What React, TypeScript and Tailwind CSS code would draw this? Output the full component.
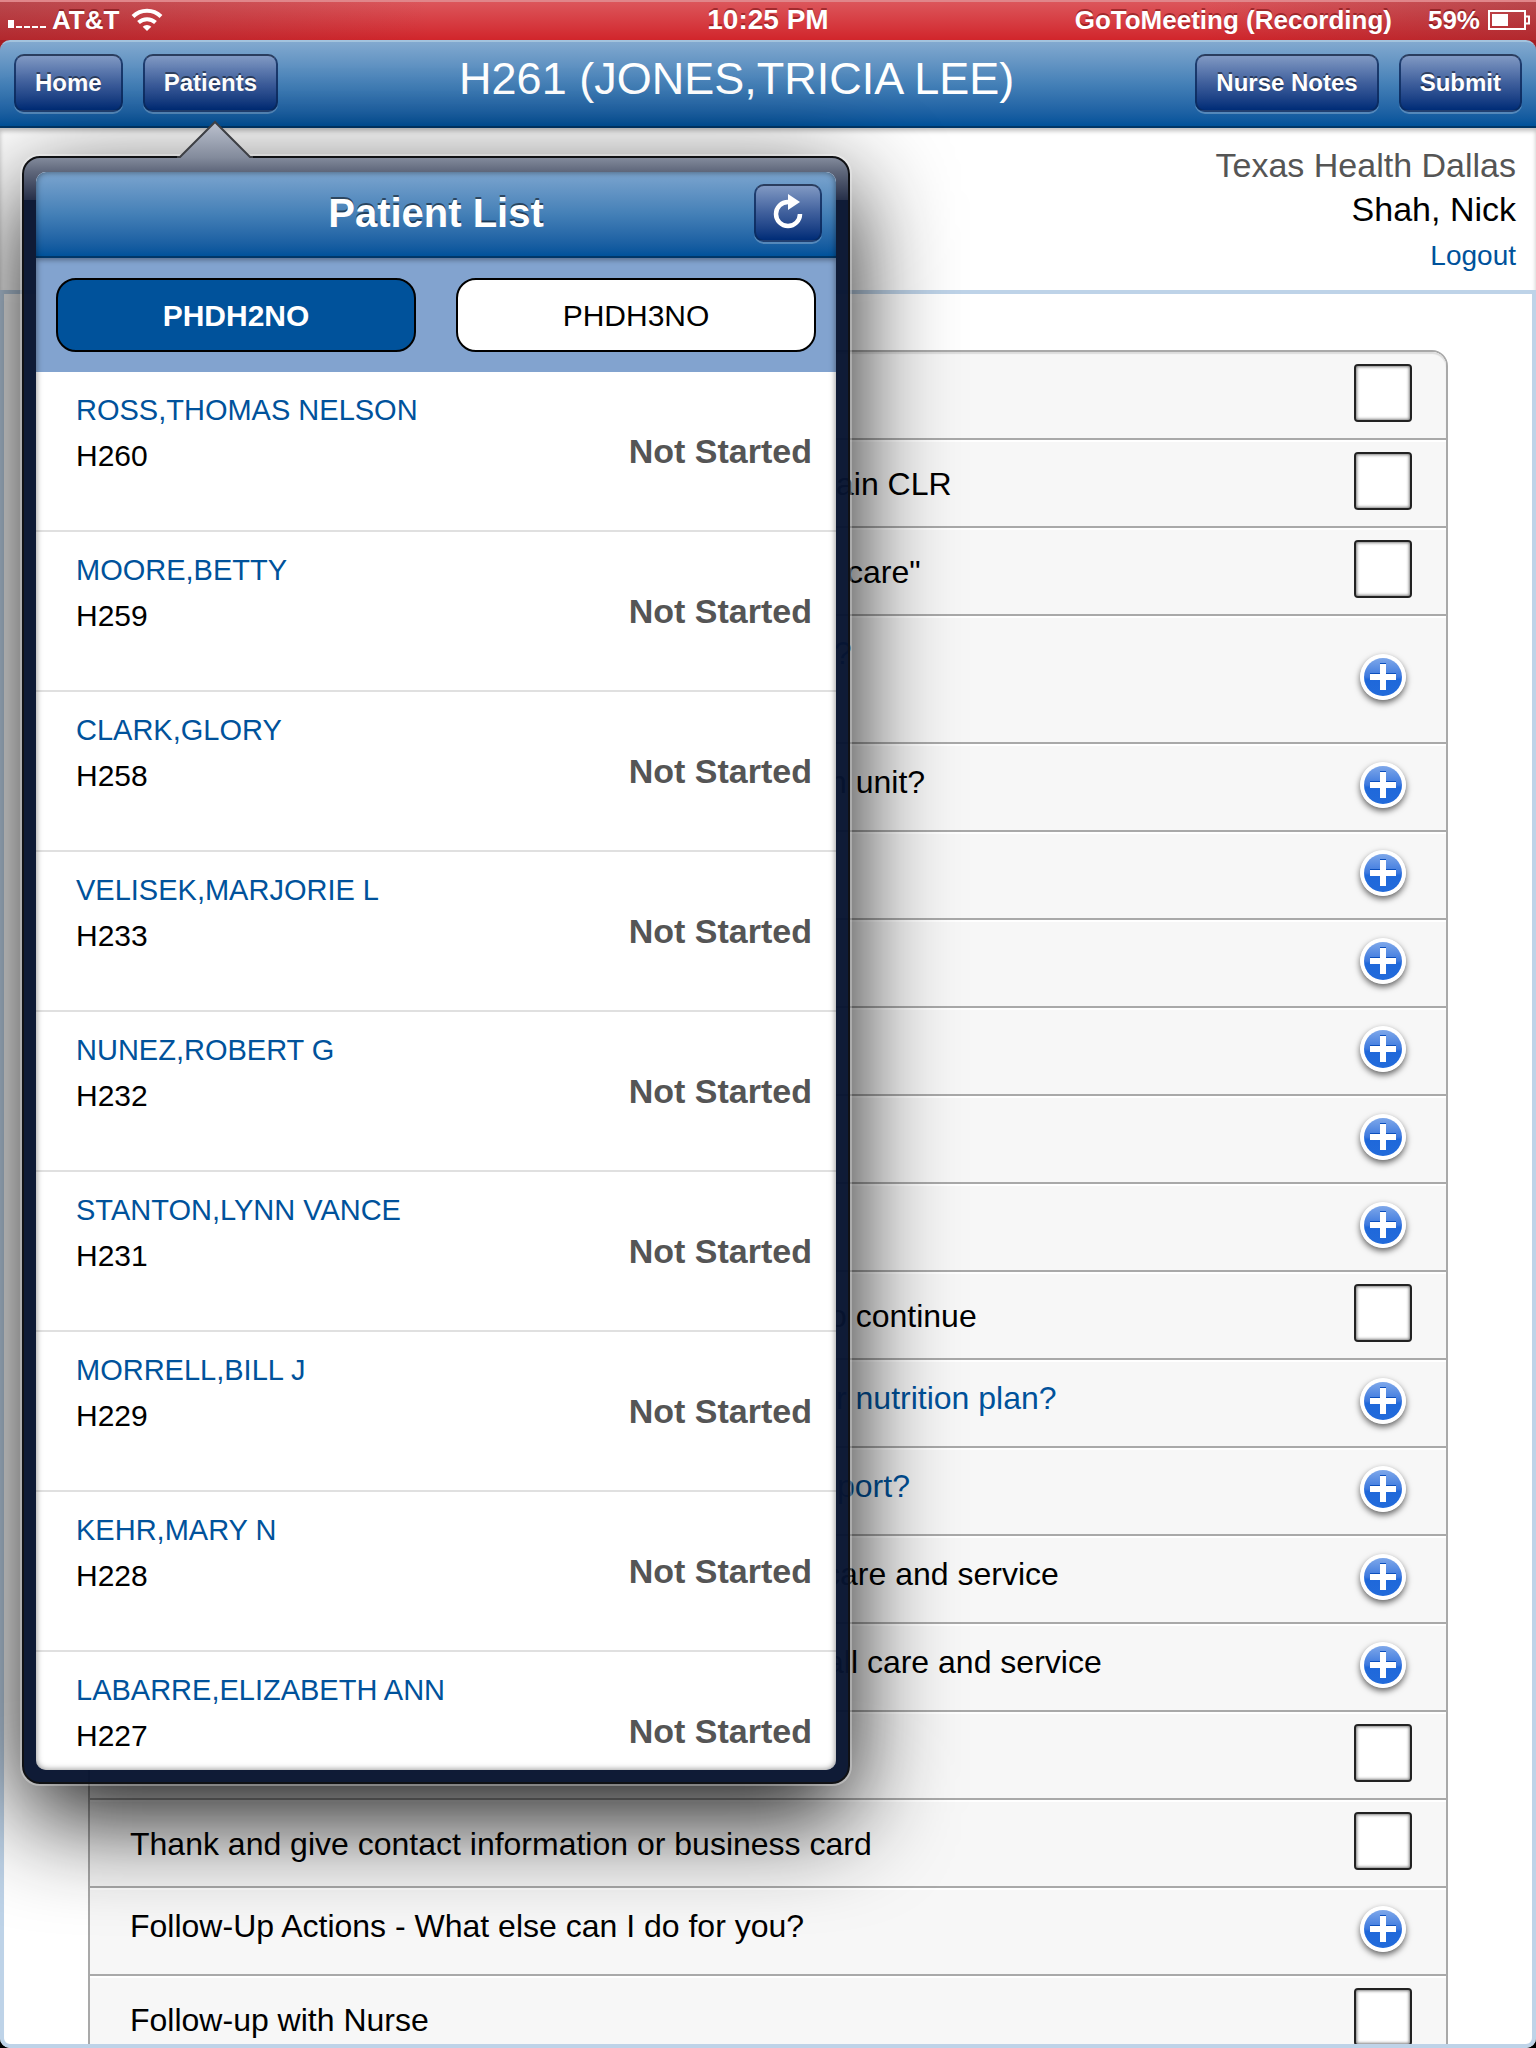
import type { ReactNode } from 'react'

type Task = {
  text: string
  control: 'check' | 'plus'
  indent?: string
  blue?: boolean
  tall?: boolean
}

const tasks: Task[] = [
  { text: '', control: 'check' },
  { text: 'ain CLR', control: 'check', indent: 'pl-[746px]' },
  { text: 'care"', control: 'check', indent: 'pl-[757px]' },
  { text: '?', control: 'plus', indent: 'pl-[744px]', blue: true, tall: true },
  { text: 'n unit?', control: 'plus', indent: 'pl-[739px]' },
  { text: '', control: 'plus' },
  { text: '', control: 'plus' },
  { text: '', control: 'plus' },
  { text: '', control: 'plus' },
  { text: '', control: 'plus' },
  { text: 'o continue', control: 'check', indent: 'pl-[739px]' },
  { text: 'r nutrition plan?', control: 'plus', indent: 'pl-[746px]', blue: true },
  { text: 'port?', control: 'plus', indent: 'pl-[747px]', blue: true },
  { text: 'care and service', control: 'plus', indent: 'pl-[734px]' },
  { text: 'all care and service', control: 'plus', indent: 'pl-[736px]' },
  { text: '', control: 'check' },
  { text: 'Thank and give contact information or business card', control: 'check' },
  { text: 'Follow-Up Actions - What else can I do for you?', control: 'plus' },
  { text: 'Follow-up with Nurse', control: 'check' },
]

const patients = [
  { name: 'ROSS,THOMAS NELSON', room: 'H260' },
  { name: 'MOORE,BETTY', room: 'H259' },
  { name: 'CLARK,GLORY', room: 'H258' },
  { name: 'VELISEK,MARJORIE L', room: 'H233' },
  { name: 'NUNEZ,ROBERT G', room: 'H232' },
  { name: 'STANTON,LYNN VANCE', room: 'H231' },
  { name: 'MORRELL,BILL J', room: 'H229' },
  { name: 'KEHR,MARY N', room: 'H228' },
  { name: 'LABARRE,ELIZABETH ANN', room: 'H227' },
]

const NavButton = ({ children, label }: { children: ReactNode; label?: string }) => (
  <button
    type="button"
    aria-label={label}
    className="flex h-[58px] items-center justify-center rounded-[10px] border-2 border-[#0b2a5c]/80 border-t-[#2a3d5e] bg-linear-to-b from-[#8199c3] via-[#3f5f9c] via-50% to-[#002c77] px-[19px] text-2xl font-bold text-white shadow-[0_2px_0_rgba(255,255,255,0.25)] [text-shadow:0_-2px_0_rgba(0,0,0,0.45)]"
  >
    {children}
  </button>
)

const StatusBar = () => (
  <div className="grid h-10 grid-cols-3 items-center border-t-2 border-[#e0868a] bg-[linear-gradient(to_right,rgba(120,45,50,0.35),transparent_28%,transparent_78%,rgba(120,45,50,0.35)),linear-gradient(to_bottom,#dc565b,#d1252b)] pb-[2px] text-[26px] leading-9 font-bold text-white [text-shadow:0_-2px_0_rgba(90,0,0,0.45)]">
    <div className="flex items-center pl-2">
      <svg width="38" height="10" viewBox="0 0 38 10" fill="#fff" className="mt-2">
        <path d="M0 1h6v8H0zM8 7h6v2H8zM16 7h6v2h-6zM24 7h6v2h-6zM32 7h6v2h-6z" />
      </svg>
      <span className="ml-[6px]">AT&amp;T</span>
      <svg width="32" height="24" viewBox="0 0 32 24" className="ml-3">
        <g fill="none" stroke="#fff" strokeWidth="4">
          <path d="M2 8.500a20 20 0 0 1 28 0" />
          <path d="M7.500 14.500a12.500 12.500 0 0 1 17 0" />
        </g>
        <path d="M16 23l-4.300-4.300a6.500 6.500 0 0 1 8.600 0z" fill="#fff" />
      </svg>
    </div>
    <div className="text-center text-[28px]">10:25 PM</div>
    <div className="flex items-center justify-end pr-[6px] whitespace-nowrap">
      <span className="mr-9">GoToMeeting (Recording)</span>
      <span className="mr-2">59%</span>
      <svg width="42" height="20" viewBox="0 0 42 20">
        <path d="M1 1h36v5.500h4v7h-4V19H1z" fill="none" stroke="#fff" strokeWidth="2" />
        <path d="M37 6v8" stroke="#fff" strokeWidth="2" />
        <path d="M4 4h16v12H4z" fill="#fff" />
      </svg>
    </div>
  </div>
)

const PlusIcon = () => (
  <svg width="46" height="46" viewBox="0 0 46 46" className="rounded-full shadow-[0_3px_6px_rgba(0,0,0,0.6)]">
    <defs>
      <linearGradient id="plusBlue" x1="0" y1="0" x2="0" y2="1">
        <stop offset="0" stopColor="#7ea8ea" />
        <stop offset="0.5" stopColor="#3c78de" />
        <stop offset="0.56" stopColor="#1f68da" />
        <stop offset="1" stopColor="#226bdb" />
      </linearGradient>
    </defs>
    <circle cx="23" cy="23" r="23" fill="#fff" />
    <circle cx="23" cy="23" r="19" fill="url(#plusBlue)" />
    <path d="M20 9h6v10h10v3H26h-6H10v-3h10z" fill="#0b4fbd" />
    <path d="M20 10h6v10h10v6H26v10h-6V26H10v-6h10z" fill="#fff" />
  </svg>
)

const TaskRow = ({ task, id }: { task: Task; id: string }) => (
  <li
    className={`flex items-center justify-between border-b-2 border-[#a9a9a9] bg-[#f7f7f7] pt-3 pr-[34px] pb-4 shadow-[inset_0_2px_0_#fff] first:rounded-t-[14px] first:shadow-[inset_0_2px_1px_#dcdcdc] ${
      task.tall ? 'h-32' : 'h-[88px]'
    }`}
  >
    <label
      htmlFor={id}
      className={`text-[32px] leading-10 whitespace-nowrap ${task.indent ?? 'pl-10'} ${
        task.blue ? 'text-[#00529b]' : 'text-black'
      } ${task.control === 'check' ? 'pt-[6px]' : task.tall ? 'pb-12' : 'pb-[6px]'}`}
    >
      {task.text}
    </label>
    {task.control === 'check' ? (
      <input
        id={id}
        type="checkbox"
        aria-label={task.text || 'Done'}
        className="size-[58px] shrink-0 appearance-none rounded-[4px] border-2 border-[#222] bg-white shadow-[inset_0_0_3px_1px_rgba(0,0,0,0.5)]"
      />
    ) : (
      <button id={id} type="button" aria-label="Expand" className="flex w-[58px] shrink-0 justify-center">
        <PlusIcon />
      </button>
    )}
  </li>
)

const PatientPopover = () => (
  <div className="absolute top-[156px] bottom-[264px] left-[22px] flex w-[828px] flex-col rounded-[18px] border-2 border-[#101114] bg-[#07142f]/97 bg-[linear-gradient(to_bottom,#828a9b,#5e667a_14px,#262f49_42px,transparent_42px)] px-3 pt-[14px] pb-3 shadow-[0_0_0_2px_rgba(255,255,255,0.3),0_32px_100px_rgba(0,0,0,0.92)]">
    {/* Arrow pointing at the Patients button */}
    <svg width="76" height="38" viewBox="0 0 76 38" className="absolute -top-[38px] left-[153px]">
      <defs>
        <linearGradient id="arrowFill" x1="0" y1="0" x2="0" y2="1">
          <stop offset="0" stopColor="#bcc2cf" />
          <stop offset="1" stopColor="#828a9b" />
        </linearGradient>
      </defs>
      <path d="M3 37.500L38 2l35 35.500V38H3z" fill="url(#arrowFill)" />
      <path d="M0 37h3L38 2l35 35h3" fill="none" stroke="#3d3f44" strokeWidth="2" />
    </svg>

    <div className="relative flex min-h-0 flex-1 flex-col overflow-hidden rounded-[10px] bg-white">
      <div className="z-10 grid h-[86px] shrink-0 grid-cols-[68px_1fr_68px] items-center border-b-2 border-[#003768] bg-linear-to-b from-[#7ca5cf] via-[#4480b7] via-50% to-[#00529a] px-[14px] pb-[2px] shadow-[0_2px_5px_rgba(0,0,0,0.35)]">
        <h2 className="col-start-2 text-center text-[40px] leading-[44px] font-bold text-white [text-shadow:0_-2px_0_rgba(0,0,0,0.5)]">
          Patient List
        </h2>
        <NavButton label="Refresh">
          <svg width="30" height="38" viewBox="0 0 30 38" className="shrink-0">
            <path d="M16 8h-1A12 12 0 1 0 27 20" fill="none" stroke="#fff" strokeWidth="4.500" />
            <path d="M15 0l12 8-12 8z" fill="#fff" />
          </svg>
        </NavButton>
      </div>

      <div className="grid shrink-0 grid-cols-2 gap-10 bg-[#82a3cf] p-5">
        <button type="button" className="h-[74px] rounded-[20px] border-2 border-black bg-[#00529b] text-[30px] font-bold text-white">
          PHDH2NO
        </button>
        <button type="button" className="h-[74px] rounded-[20px] border-2 border-black bg-white text-[30px] text-black">
          PHDH3NO
        </button>
      </div>

      <ul className="min-h-0 flex-1 overflow-hidden">
        {patients.map((patient) => (
          <li key={patient.room} className="flex h-40 items-center justify-between border-b-2 border-[#e0e0e0] pr-6 pl-10">
            <div className="pb-9 leading-[46px]">
              <a href="#" className="block text-[29px] text-[#00529b]">
                {patient.name}
              </a>
              <p className="text-[30px] text-black">{patient.room}</p>
            </div>
            <span className="text-[34px] leading-10 font-bold text-[#555]">Not Started</span>
          </li>
        ))}
      </ul>
      <div className="pointer-events-none absolute inset-0 z-20 rounded-[10px] shadow-[inset_0_0_6px_rgba(0,0,0,0.5)]"></div>
    </div>
  </div>
)

export default function App() {
  return (
    <div className="relative flex h-screen flex-col overflow-hidden bg-black font-['Liberation_Sans',Arial,sans-serif]">
      <StatusBar />

      <div className="bg-[#a51d23]">
        <header className="flex h-[88px] items-center justify-between rounded-t-[10px] border-t-2 border-b-2 border-t-[#a3c3dd] border-b-[#003768] bg-linear-to-b from-[#82a9cf] via-[#4480b7] via-50% to-[#00529a] px-[14px] pb-[2px]">
          <div className="flex gap-5">
            <NavButton>Home</NavButton>
            <NavButton>Patients</NavButton>
          </div>
          <h1 className="pb-2 text-center text-[45px] leading-[52px] whitespace-nowrap text-white">
            H261 (JONES,TRICIA LEE)
          </h1>
          <div className="flex gap-5">
            <NavButton>Nurse Notes</NavButton>
            <NavButton>Submit</NavButton>
          </div>
        </header>
      </div>

      <div className="flex min-h-0 flex-1 flex-col rounded-b-[10px] bg-white shadow-[inset_0_3px_4px_rgba(0,0,0,0.25)]">
        <div className="flex h-[162px] shrink-0 flex-col items-end pt-[15px] pr-5 text-[34px] leading-[44px]">
          <p className="text-[#555]">Texas Health Dallas</p>
          <p className="text-black">Shah, Nick</p>
          <a href="#" className="text-[28px] leading-[50px] text-[#00529b]">
            Logout
          </a>
        </div>

        <main className="min-h-0 flex-1 overflow-hidden rounded-b-[10px] border-4 border-[#bed3e8] px-[84px] pt-14">
          <ul className="rounded-t-[16px] border-2 border-[#a9a9a9]">
            {tasks.map((task, i) => (
              <TaskRow key={i} task={task} id={`task-${i}`} />
            ))}
          </ul>
        </main>
      </div>

      <PatientPopover />
    </div>
  )
}
